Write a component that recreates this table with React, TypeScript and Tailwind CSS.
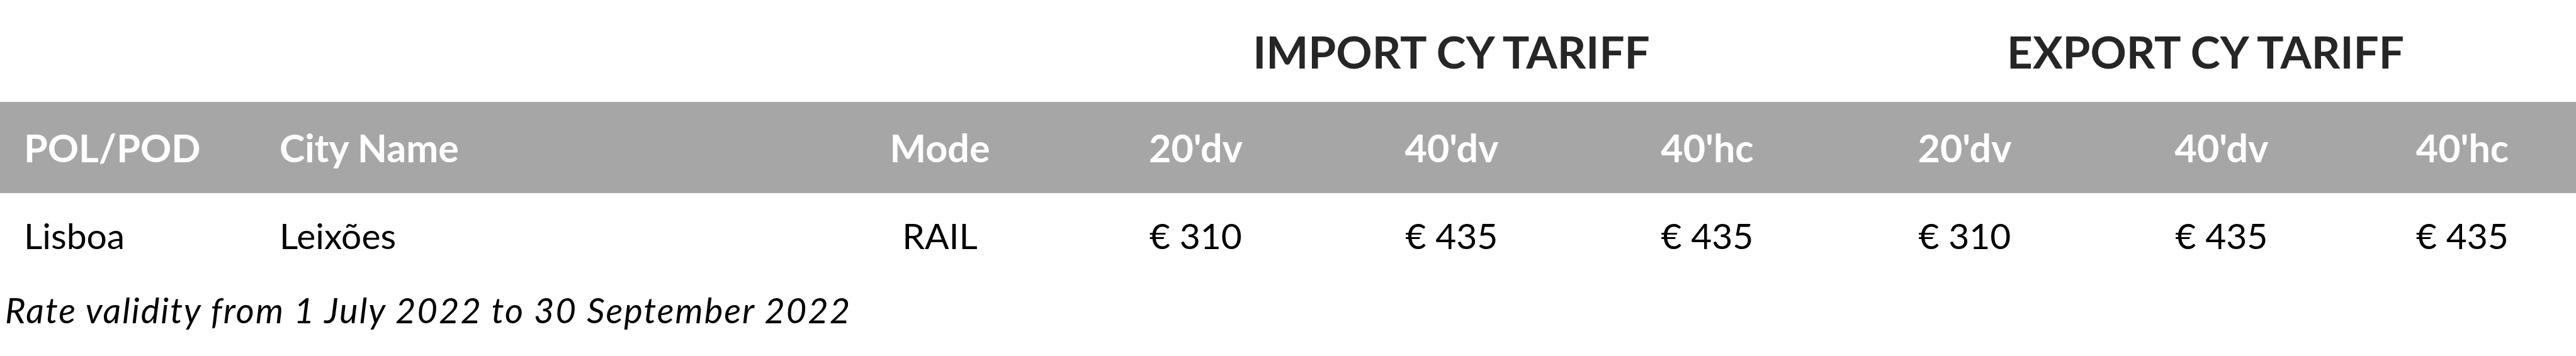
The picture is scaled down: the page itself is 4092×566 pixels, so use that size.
import React from "react";

type Col = { w: string; align: "left" | "center" };

const cols: Col[] = [
  { w: "w-[406px]", align: "left" },
  { w: "w-[884px]", align: "left" },
  { w: "w-[406px]", align: "center" },
  { w: "w-[407px]", align: "center" },
  { w: "w-[406px]", align: "center" },
  { w: "w-[406px]", align: "center" },
  { w: "w-[412px]", align: "center" },
  { w: "w-[404px]", align: "center" },
  { w: "w-[361px]", align: "center" },
];

const headers = ["POL/POD", "City Name", "Mode", "20'dv", "40'dv", "40'hc", "20'dv", "40'dv", "40'hc"];
const row = ["Lisboa", "Leixões", "RAIL", "€ 310", "€ 435", "€ 435", "€ 310", "€ 435", "€ 435"];

function Cell({ col, children }: { col: Col; children: React.ReactNode }) {
  return (
    <div
      className={`${col.w} shrink-0 whitespace-nowrap ${col.align === "left" ? "pl-[38px] text-left" : "text-center"}`}
    >
      {children}
    </div>
  );
}

export default function App() {
  return (
    <div className="w-[4092px] h-[566px] bg-white text-black font-['Lato',sans-serif] overflow-hidden">
      {/* tariff group titles */}
      <div className="flex h-[162px] items-center text-[#262626] font-bold text-[71px] leading-none">
        <div className="w-[1696px] shrink-0" />
        <div className="w-[1219px] shrink-0 text-center">IMPORT CY TARIFF</div>
        <div className="w-[1177px] shrink-0 text-center">EXPORT CY TARIFF</div>
      </div>

      {/* header */}
      <div className="flex h-[145px] items-center bg-[#a6a6a6] text-white font-bold text-[61px] leading-none">
        {headers.map((h, i) => (
          <Cell key={i} col={cols[i]}>
            {h}
          </Cell>
        ))}
      </div>

      {/* data */}
      <div className="flex h-[134px] items-center text-[57px] leading-none">
        {row.map((v, i) => (
          <Cell key={i} col={cols[i]}>
            {v}
          </Cell>
        ))}
      </div>

      <div className="flex h-[104px] items-center pl-[8px] italic text-[56px] tracking-[2px] leading-none">
        Rate validity from 1 July 2022 to 30 September 2022
      </div>
    </div>
  );
}
